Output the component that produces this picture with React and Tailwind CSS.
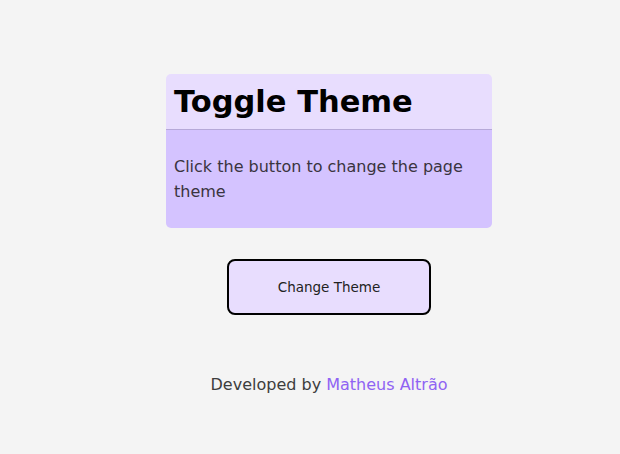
import React, { useState } from 'react';

const App = () => {
  const [dark, setDark] = useState(false);

  return (
    <div
      className={`min-h-[454px] w-full ${dark ? 'bg-[#1f1f1f]' : 'bg-[#f4f4f4]'} flex flex-col items-center pt-[74px] pl-[38px]`}
      style={{ fontFamily: '"DejaVu Sans", "Open Sans", sans-serif' }}
    >
      <div className="w-[326px] rounded-[5px] overflow-hidden">
        <div className="h-[56px] bg-[#e8ddfe] border-b border-[#b6a9d8] px-[8px] pt-[2px] flex items-center">
          <h1 className="text-[30.5px] font-bold text-black leading-none">Toggle Theme</h1>
        </div>
        <div className="bg-[#d4c3ff] px-[8px] py-[24px]">
          <p className="text-[16px] leading-[25px] text-[#3a3440]">
            Click the button to change the page theme
          </p>
        </div>
      </div>

      <button
        onClick={() => setDark(!dark)}
        className="mt-[31px] w-[204px] h-[56px] bg-[#e8ddfe] border-2 border-black rounded-[8px] text-[13.5px] text-[#222]"
      >
        Change Theme
      </button>

      <p className="mt-[58px] text-[16px] leading-[24px] text-[#3d3d3d]">
        Developed by <a href="#" className="text-[#8f63f3]">Matheus Altrão</a>
      </p>
    </div>
  );
};

export default App;
